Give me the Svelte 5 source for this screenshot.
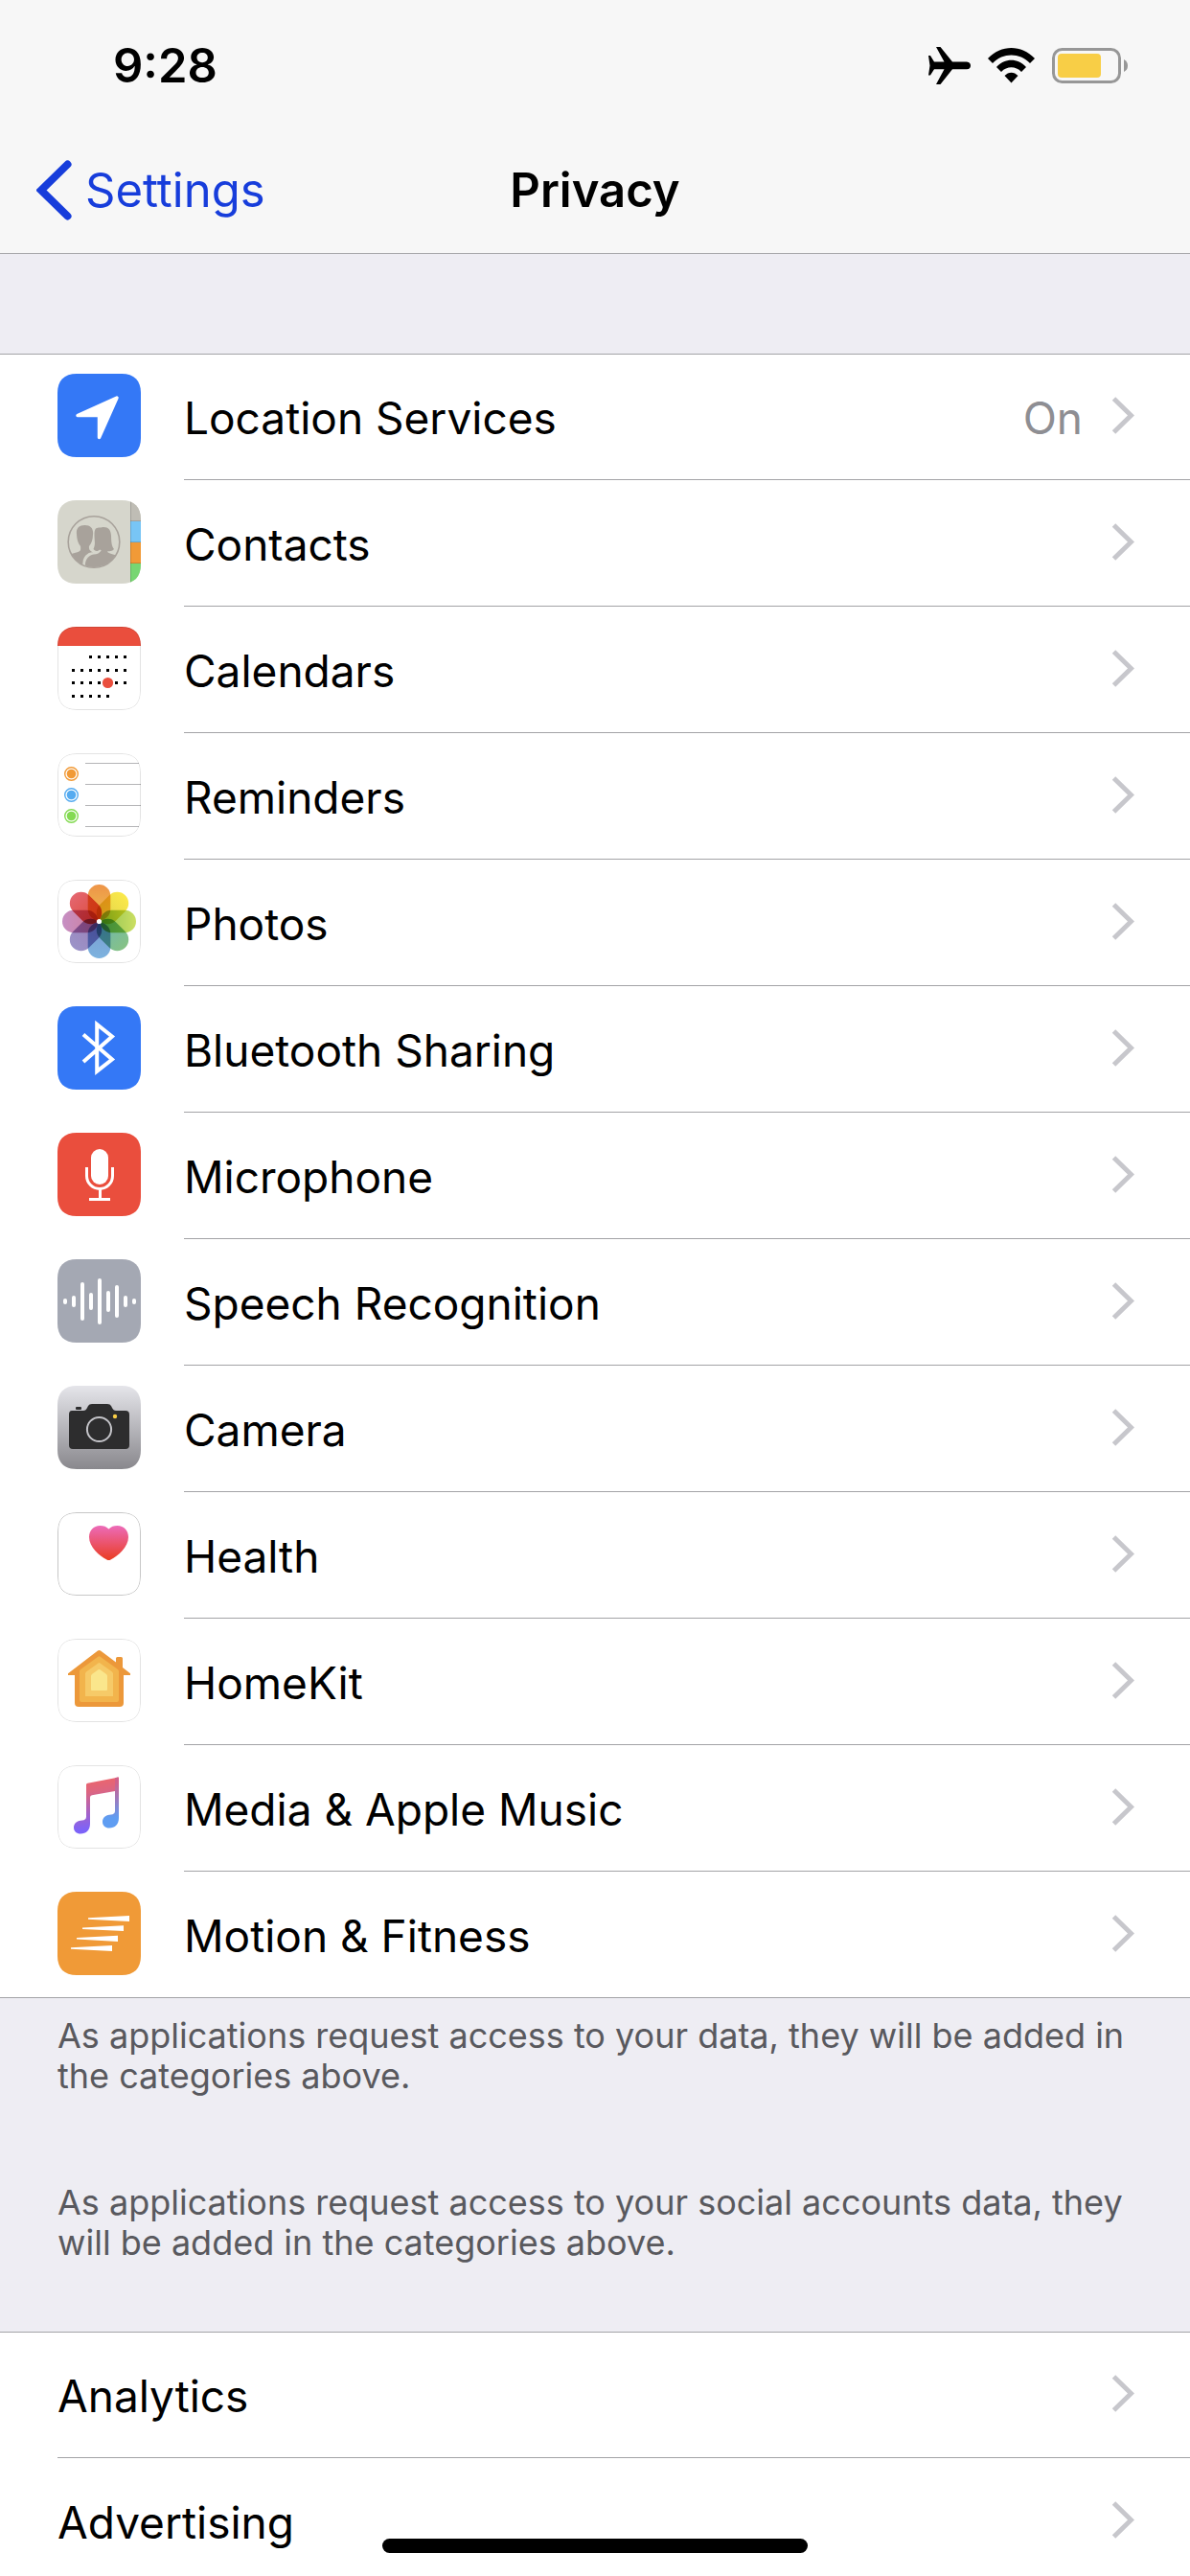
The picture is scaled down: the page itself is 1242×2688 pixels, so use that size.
<script lang="ts">
  type Item = { id: string; label: string; value?: string };

  const services: Item[] = [
    { id: 'location', label: 'Location Services', value: 'On' },
    { id: 'contacts', label: 'Contacts' },
    { id: 'calendars', label: 'Calendars' },
    { id: 'reminders', label: 'Reminders' },
    { id: 'photos', label: 'Photos' },
    { id: 'bluetooth', label: 'Bluetooth Sharing' },
    { id: 'microphone', label: 'Microphone' },
    { id: 'speech', label: 'Speech Recognition' },
    { id: 'camera', label: 'Camera' },
    { id: 'health', label: 'Health' },
    { id: 'homekit', label: 'HomeKit' },
    { id: 'media', label: 'Media & Apple Music' },
    { id: 'motion', label: 'Motion & Fitness' }
  ];

  const reports: Item[] = [
    { id: 'analytics', label: 'Analytics' },
    { id: 'advertising', label: 'Advertising' }
  ];

  // Day dots of the calendar icon, one entry per week
  const weeks = [
    { y: 30, from: 2, to: 6 },
    { y: 44, from: 0, to: 6 },
    { y: 57, from: 0, to: 6 },
    { y: 71, from: 0, to: 4 }
  ];
  const days = weeks.flatMap((w) =>
    [0, 1, 2, 3, 4, 5, 6].filter((d) => d >= w.from && d <= w.to).map((d) => ({ x: 15 + d * 9, y: w.y }))
  );

  const bullets = [
    { y: 21.5, color: '#f19a37' },
    { y: 43.5, color: '#55abf0' },
    { y: 65.5, color: '#84da53' }
  ];

  const petals = [
    ['#ee9448', '#edc04f'],
    ['#fbe94b', '#dfd24c'],
    ['#cbdf62', '#8cc152'],
    ['#86c285', '#6db6b4'],
    ['#7db3df', '#7b9bd0'],
    ['#9b93c8', '#9c80b8'],
    ['#c68fc4', '#d07f98'],
    ['#e4666f', '#dc4a3a']
  ];

  const bars = [6, 12, 40, 18, 48, 22, 34, 12, 6];
  const outlined = ['calendars', 'reminders', 'photos', 'health', 'homekit', 'media'];
</script>

{#snippet icon(id: string)}
  <svg class="icon" viewBox="0 0 87 87" aria-hidden="true">
    <defs>
      <clipPath id="clip-{id}"><path d="M20 0H67C80 0 87 7 87 20V67C87 80 80 87 67 87H20C7 87 0 80 0 67V20C0 7 7 0 20 0z" /></clipPath>
    </defs>
    <g clip-path="url(#clip-{id})">
      {#if id === 'location'}
        <rect width="87" height="87" fill="#3478f6" />
        <path d="M62 25 21 43.500H43.500V66.500z" fill="#fff" stroke="#fff" stroke-width="3.5" stroke-linejoin="round" />
      {:else if id === 'contacts'}
        <rect width="87" height="87" fill="#d6d6cc" />
        <rect x="76" width="11" height="22" fill="#bfbdb5" />
        <rect x="76" y="22" width="11" height="22" fill="#78c5f5" />
        <rect x="76" y="44" width="11" height="22" fill="#f19a37" />
        <rect x="76" y="66" width="11" height="21" fill="#77d672" />
        <path d="M76 21.500H87M76 43.500H87M76 65.500H87M76.500 0V87" stroke="#000" stroke-opacity=".15" />
        <clipPath id="badge"><circle cx="38" cy="43.500" r="26.500" /></clipPath>
        <g clip-path="url(#badge)" fill="#a8a29b">
          <path d="M28.500 26C22 26 19.300 29.500 20 35.500C20.300 40.500 21 44.500 24 48C24.500 52 24 53 21.500 54C18 55 14 55.500 11 58V72H26C26 62 31 56 38 54.500C34 53.500 32.500 52 33 48C35.500 45 37 41 37 36C37.800 30 35 26 28.500 26z" />
          <path d="M40 29.500C43 27.500 45 29 47.500 28C53 27.800 55.800 31 56 37C56.200 44 56.500 48 59 51C57 53.500 54 53 52 53.500C53 55.500 57 56 63 58V72H29C27.500 62 33 57 38 56.500C41 56.300 43.500 55.500 44.500 53.500C42 53 39.500 53.500 37.500 51C40 46 38.500 42 38.500 37C38.500 33.500 38.700 31 40 29.500z" />
          <path d="M27.500 67C27 59 32 55.500 37 55C41 54.500 43.500 54 45 52" fill="none" stroke="#d6d6cc" stroke-width="2" />
        </g>
        <circle cx="38" cy="43.500" r="26.800" fill="none" stroke="#a8a29b" stroke-width="1.6" />
      {:else if id === 'calendars'}
        <rect width="87" height="87" fill="#fff" />
        <rect width="87" height="20" fill="#ea4e3d" />
        {#each days as day}
          <rect x={day.x} y={day.y} width="3" height="3" />
        {/each}
        <circle cx="52.500" cy="58.500" r="5.600" fill="#ea4e3d" />
      {:else if id === 'reminders'}
        <rect width="87" height="87" fill="#fff" />
        <path d="M29 10.500H85M29 32.500H87M29 54.500H87M29 76.500H85" stroke="#b5b5b7" />
        {#each bullets as bullet}
          <circle cx="14.500" cy={bullet.y} r="6.800" fill="none" stroke={bullet.color} stroke-width="1.4" />
          <circle cx="14.500" cy={bullet.y} r="4.800" fill={bullet.color} />
        {/each}
      {:else if id === 'photos'}
        <rect width="87" height="87" fill="#fff" />
        {#each petals as [tip, base], i}
          <linearGradient id="petal-{i}" x2="0" y2="1">
            <stop offset="0" stop-color={tip} />
            <stop offset="1" stop-color={base} />
          </linearGradient>
          <rect class="petal" x="31.700" y="5" width="23.600" height="37.500" rx="11.800" fill="url(#petal-{i})" transform="rotate({i * 45} 43.500 43.500)" />
        {/each}
        <circle cx="43.500" cy="43.500" r="2.600" fill="#fff" />
      {:else if id === 'bluetooth'}
        <rect width="87" height="87" fill="#3478f6" />
        <path d="M27 29.500 57 55.500 41.200 67.800V19L57 31.500 27 58" fill="none" stroke="#fff" stroke-width="4" />
      {:else if id === 'microphone'}
        <rect width="87" height="87" fill="#ea4e3d" />
        <rect x="35" y="17" width="18" height="37" rx="9" fill="#fff" />
        <path d="M30.500 36V45A13.500 13.500 0 0 0 57.500 45V36M44.500 59V69M33 69.500H55" fill="none" stroke="#fff" stroke-width="3" />
      {:else if id === 'speech'}
        <rect width="87" height="87" fill="#a4a8b3" />
        {#each bars as bar, i}
          <rect x={6 + i * 9} y={44 - bar / 2} width="4" height={bar} rx="2" fill="#fff" />
        {/each}
      {:else if id === 'camera'}
        <linearGradient id="steel" x2="0" y2="1">
          <stop offset="0" stop-color="#e5e5ea" />
          <stop offset="1" stop-color="#89888d" />
        </linearGradient>
        <rect width="87" height="87" fill="url(#steel)" />
        <path d="M15 26H27C29 26 30 25 31 23L32 21Q33 19 36 19H52Q55 19 56 21L57 23C58 25 59 26 61 26H71Q75 26 75 30V62Q75 66 71 66H16Q12 66 12 62V30Q12 26 15 26z" fill="#2d2d2e" />
        <rect x="19" y="22" width="6" height="3" rx="1" fill="#2d2d2e" />
        <circle cx="43.500" cy="45.500" r="12.600" fill="none" stroke="#c3c3c8" stroke-width="2" />
        <circle cx="60" cy="32" r="2.200" fill="#f8cd46" />
      {:else if id === 'health'}
        <linearGradient id="heart" x2="0" y2="1">
          <stop offset="0" stop-color="#ec6bb9" />
          <stop offset="1" stop-color="#ea3d22" />
        </linearGradient>
        <rect width="87" height="87" fill="#fff" />
        <path d="M53.500 17.500C56 15 58.500 14 62.500 14C69.500 14 74 19 74 26C74 36 63.500 45.500 55.500 49.500Q53.500 50.500 51.500 49.500C43.500 45.500 33 36 33 26C33 19 37.500 14 44.500 14C48.500 14 51 15 53.500 17.500z" fill="url(#heart)" />
      {:else if id === 'homekit'}
        <rect width="87" height="87" fill="#fff" />
        <path d="M42 12.600Q43.500 11.500 45 12.600L61 24.500V20.500Q61 19 62.500 19H66.500Q68 19 68 20.500V30L76 36.300V38H69V67Q69 71 65 71H22Q18 71 18 67V38H11V36.300z" fill="#ec983a" />
        <path d="M42 19Q43.500 17.500 45 19L63 32Q64 33 64 34V64Q64 66 62 66H25Q23 66 23 64V34Q23 33 24 32z" fill="#f2b44c" />
        <path d="M42.500 25.500Q43.500 24.500 44.500 25.500L57 34.500Q58 35.500 58 36.500V60H29V36.500Q29 35.500 30 34.500z" fill="#f6ca68" />
        <path d="M42.500 32.300Q43.500 31.500 44.500 32.300L51 37Q52 38 52 39V53Q52 54 51 54H36Q35 54 35 53V39Q35 38 36 37z" fill="#fae68c" />
      {:else if id === 'media'}
        <linearGradient id="note" x1=".4" y1="0" x2=".5" y2="1">
          <stop offset="0" stop-color="#ee6568" />
          <stop offset=".25" stop-color="#dd6580" />
          <stop offset=".6" stop-color="#a863c4" />
          <stop offset=".9" stop-color="#7d63f8" />
        </linearGradient>
        <linearGradient id="note-right" x2="0" y2="1">
          <stop offset=".1" stop-color="#d0608a" />
          <stop offset=".45" stop-color="#9a7cc0" />
          <stop offset=".8" stop-color="#5f9df2" />
        </linearGradient>
        <rect width="87" height="87" fill="#fff" />
        <path d="M30 20.500Q30 19 31.500 18.700L64 12.500V27L60 27L36 31.300Q34 31.700 34 33.500V61C34 67.500 30 71.500 24 71.500C20 71.500 17 69 17 65C17 61 20 58.500 24 57.800L27.500 57.200Q30 56.700 30 54z" fill="url(#note)" />
        <path d="M60 13.300 62.500 12.600Q64 12.400 64 14V55C64 61.500 60 65.500 54 65.500C50 65.500 47 63 47 59C47 55 50 52.500 54 51.800L57.500 51.200Q60 50.700 60 48z" fill="url(#note-right)" />
      {:else if id === 'motion'}
        <rect width="87" height="87" fill="#f09a37" />
        <path d="M32 27.200 75 25V31L32 28.700zM26 37.500 69 35.200V41L26 39zM20 48 63 45.800V52L20 49.500zM14 58.300 57 56V62L14 59.800z" fill="#fff" />
      {/if}
      {#if outlined.includes(id)}
        <path
          d="M20 .5H67C80 .5 86.500 7 86.500 20V67C86.500 80 80 86.500 67 86.500H20C7 86.500 .5 80 .5 67V20C.5 7 7 .5 20 .5z"
          fill="none"
          stroke="#000"
          stroke-opacity={id === 'health' ? 0.22 : 0.11}
        />
      {/if}
    </g>
  </svg>
{/snippet}

{#snippet row(item: Item, withIcon: boolean)}
  <li>
    <a class="row" href="#{item.id}">
      {#if withIcon}
        {@render icon(item.id)}
      {/if}
      <span class="body">
        <span class="label">{item.label}</span>
        {#if item.value}
          <span class="value">{item.value}</span>
        {/if}
        <svg class="chevron" viewBox="0 0 24 39" aria-hidden="true">
          <path d="M2.500 2 20.500 19.500 2.500 37" fill="none" stroke="#c7c7cc" stroke-width="5" />
        </svg>
      </span>
    </a>
  </li>
{/snippet}

<div class="screen">
  <header>
    <div class="status">
      <time>9:28</time>
      <div class="indicators">
        <svg width="44" height="39" viewBox="0 0 44 39" aria-hidden="true">
          <path d="M0 9H2L6 15.500H16.500L8 0H12.500L25 15.500H40Q44 16 44 19.500Q44 23 40 23.200H25L12.500 39H8L16.500 23.200H6L2 29.500H0L1.500 19.500z" />
        </svg>
        <svg width="49" height="37" viewBox="0 0 49 37" aria-hidden="true">
          <path d="M0 11C14-3.600 35-3.600 49 11L44 16C33 4.800 16 4.800 5 16zM9 20C18 10.300 31 10.300 40 20L35 25C29 18.800 20 18.800 14 25zM17.500 29C21.500 24.500 27.500 24.500 31.500 29L24.500 36.500z" />
        </svg>
        <svg width="80" height="37" viewBox="0 0 80 37" aria-hidden="true">
          <rect x="1.500" y="1.500" width="69" height="34" rx="9" fill="none" stroke="#979797" stroke-width="3" />
          <rect x="6" y="6" width="45" height="25" rx="4" fill="#f8ce46" />
          <path d="M75 12Q79 14 79 18.500Q79 23 75 25z" fill="#979797" />
        </svg>
      </div>
    </div>
    <nav>
      <a class="back" href="#settings">
        <svg width="37" height="63" viewBox="0 0 37 63" aria-hidden="true">
          <path d="M32.500 4.500 5 31.500 32.500 58.500" fill="none" stroke="#173ddb" stroke-width="8" stroke-linecap="round" />
        </svg>
        Settings
      </a>
      <h1>Privacy</h1>
    </nav>
  </header>

  <main>
    <ul>
      {#each services as item}
        {@render row(item, true)}
      {/each}
    </ul>
    <p>As applications request access to your data, they will be added in the categories above.</p>
    <p>As applications request access to your social accounts data, they will be added in the categories above.</p>
    <ul>
      {#each reports as item}
        {@render row(item, false)}
      {/each}
    </ul>
  </main>

  <div class="home-bar"></div>
</div>

<style>
  .screen {
    position: relative;
    display: flex;
    flex-direction: column;
    height: 100vh;
    overflow: hidden;
    background: #eeedf3;
    color: #000;
    font-family: Inter, 'Liberation Sans', sans-serif;
    font-size: 46px;
  }

  a {
    color: inherit;
    text-decoration: none;
  }

  svg {
    display: block;
    flex-shrink: 0;
  }

  header {
    flex-shrink: 0;
    background: #f7f7f7;
    border-bottom: 1px solid #a7a7aa;
  }

  .status {
    display: flex;
    align-items: center;
    justify-content: space-between;
    height: 136px;
    padding: 0 64px 0 118px;
  }

  time {
    font-size: 49px;
    font-weight: 600;
  }

  .indicators {
    display: flex;
    align-items: center;
    gap: 18px;
  }

  nav {
    display: grid;
    grid-template-columns: 1fr auto 1fr;
    align-items: center;
    height: 124px;
    padding: 0 38px 4px;
  }

  .back {
    display: flex;
    align-items: center;
    gap: 14px;
    color: #173ddb;
    font-size: 49px;
  }

  h1 {
    margin: 0;
    font-size: 49px;
    font-weight: 600;
  }

  main {
    flex: 1;
    min-height: 0;
    padding-top: 104px;
    overflow-y: auto;
    scrollbar-width: none;
  }

  ul {
    margin: 0;
    padding: 0;
    list-style: none;
    background: #fff;
    box-shadow: inset 0 1px #a3a3a6, inset 0 -1px #a3a3a6;
  }

  .row {
    display: flex;
    height: 132px;
    padding-left: 60px;
  }

  .icon {
    width: 87px;
    height: 87px;
    margin: 21px 45px 0 0;
  }

  .petal {
    mix-blend-mode: multiply;
  }

  .body {
    flex: 1;
    display: flex;
    align-items: center;
    box-sizing: border-box;
    padding: 0 58px 2px 0;
    border-bottom: 1px solid #a3a3a6;
  }

  li:last-child .body {
    border-bottom-color: transparent;
  }

  .label,
  .value {
    padding-top: 5px;
  }

  .label {
    flex: 1;
  }

  .value {
    margin-right: 30px;
    color: #8e8e93;
  }

  .chevron {
    width: 24px;
    height: 39px;
  }

  p {
    margin: 0;
    padding: 18px 60px 72px;
    color: #59595e;
    font-size: 36px;
    line-height: 42px;
  }

  .home-bar {
    position: absolute;
    bottom: 24px;
    left: 50%;
    width: 444px;
    height: 15px;
    margin-left: -222px;
    border-radius: 8px;
    background: #000;
  }
</style>
